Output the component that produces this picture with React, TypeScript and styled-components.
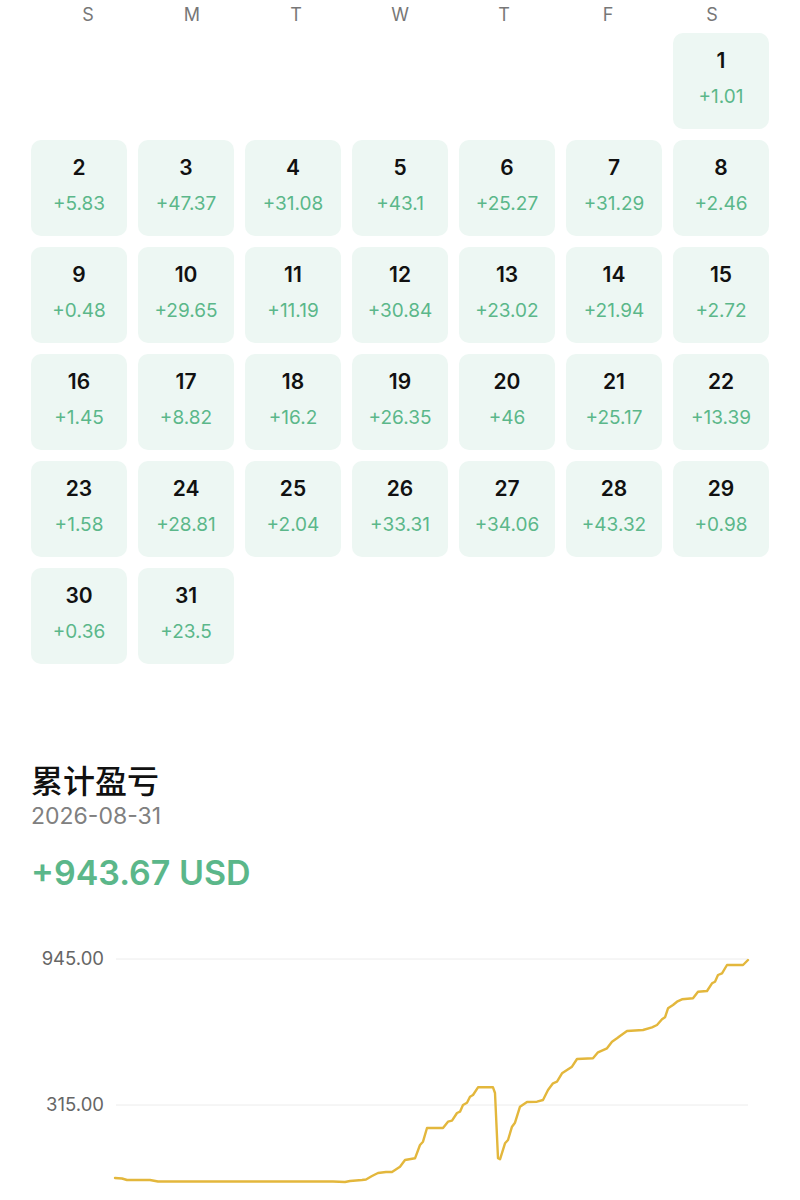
import styled, { createGlobalStyle } from "styled-components";

const WEEKDAYS = ["S", "M", "T", "W", "T", "F", "S"];

// first day of the month falls on Saturday
const LEAD = 6;

const DAILY = [
  1.01, 5.83, 47.37, 31.08, 43.1, 25.27, 31.29, 2.46, 0.48, 29.65, 11.19,
  30.84, 23.02, 21.94, 2.72, 1.45, 8.82, 16.2, 26.35, 46, 25.17, 13.39, 1.58,
  28.81, 2.04, 33.31, 34.06, 43.32, 0.98, 0.36, 23.5,
];

// cumulative curve, in chart pixels (x, y) relative to the svg box
const CURVE: [number, number][] = [
  [115, 248], [122, 248.5], [127, 250], [140, 250], [150, 250], [158, 251.5],
  [200, 251.5], [260, 251.5], [333, 251.5], [345, 252], [350, 251],
  [362, 250], [366, 249.5], [372, 246], [378, 243], [386, 242], [392, 242],
  [400, 236.7], [405, 230], [415, 228.3], [420, 215], [423, 211.7],
  [427, 198], [443, 198], [448, 191.7], [452, 190.7], [457, 183],
  [460, 181.7], [463, 175], [467, 172.7], [470, 166.7], [473, 165],
  [478, 157.3], [493, 157.3], [495, 163], [498, 228.3], [500, 229.3],
  [505, 213.3], [508, 210], [512, 196.7], [515, 192.7], [520, 176.7],
  [527, 172], [537, 171.7], [543, 170], [548, 160], [553, 153.3],
  [557, 151.7], [562, 143.3], [567, 140], [572, 136.7], [577, 129],
  [593, 128.3], [598, 122.3], [607, 118.3], [612, 111.7], [617, 108.3],
  [620, 106], [627, 101], [643, 100], [652, 97.3], [657, 95], [662, 89.3],
  [665, 87.3], [668, 78.3], [673, 75], [677, 71.7], [682, 69.3], [693, 68.3],
  [698, 61.7], [707, 61], [712, 53.3], [715, 51.7], [718, 45], [722, 43.3],
  [727, 35], [743, 35], [748, 30],
];

const GRID = [
  { label: "945.00", y: 29 },
  { label: "315.00", y: 175 },
];

const fmt = (v: number) => (v >= 0 ? "+" : "") + v;

export default function App() {
  const cells: (number | null)[] = [
    ...Array(LEAD).fill(null),
    ...DAILY.map((_, i) => i + 1),
  ];

  return (
    <Page>
      <GlobalStyle />
      <WeekRow>
        {WEEKDAYS.map((d, i) => (
          <WeekDay key={i}>{d}</WeekDay>
        ))}
      </WeekRow>
      <Grid>
        {cells.map((day, i) =>
          day === null ? (
            <Blank key={i} />
          ) : (
            <Cell key={i}>
              <DayNum>{day}</DayNum>
              <DayPnl>{fmt(DAILY[day - 1])}</DayPnl>
            </Cell>
          )
        )}
      </Grid>

      <Summary>
        <Title>累计盈亏</Title>
        <DateText>2026-08-31</DateText>
        <Total>+943.67 USD</Total>
      </Summary>

      <Chart width="800" height="270" viewBox="0 0 800 270">
        {GRID.map((g) => (
          <g key={g.label}>
            <line x1="116" x2="748" y1={g.y} y2={g.y} stroke="#ececec" strokeWidth="1" />
            <AxisLabel x="104" y={g.y + 6} textAnchor="end">
              {g.label}
            </AxisLabel>
          </g>
        ))}
        <polyline
          points={CURVE.map(([x, y]) => `${x},${y}`).join(" ")}
          fill="none"
          stroke="#e3b73c"
          strokeWidth="2.4"
          strokeLinejoin="round"
          strokeLinecap="round"
        />
      </Chart>
    </Page>
  );
}

const GlobalStyle = createGlobalStyle`
  body {
    margin: 0;
    background: #fff;
    font-family: Inter, "Noto Sans", "Noto Sans CJK SC", sans-serif;
  }
`;

const Page = styled.div`
  width: 800px;
  height: 1200px;
  overflow: hidden;
`;

const WeekRow = styled.div`
  display: grid;
  grid-template-columns: repeat(7, 1fr);
  padding: 0 36px;
  height: 30px;
  margin-bottom: 3px;
`;

const WeekDay = styled.div`
  text-align: center;
  line-height: 30px;
  font-size: 18px;
  color: #777;
`;

const Grid = styled.div`
  display: grid;
  grid-template-columns: repeat(7, 96px);
  grid-auto-rows: 96px;
  gap: 11px;
  padding: 0 31px;
`;

const Blank = styled.div``;

const Cell = styled.div`
  display: flex;
  flex-direction: column;
  align-items: center;
  padding-top: 16px;
  gap: 12px;
  background: #edf7f3;
  border-radius: 10px;
`;

const DayNum = styled.div`
  font-size: 21px;
  line-height: 24px;
  font-weight: 600;
  color: #111;
`;

const DayPnl = styled.div`
  font-size: 19px;
  line-height: 24px;
  color: #5bb78a;
`;

const Summary = styled.div`
  display: flex;
  flex-direction: column;
  padding: 0 31px;
  margin-top: 95px;
`;

const Title = styled.h2`
  margin: 0;
  font-family: "Noto Sans CJK SC", sans-serif;
  font-size: 32px;
  line-height: 40px;
  font-weight: 500;
  color: #111;
`;

const DateText = styled.div`
  margin-top: 2px;
  font-size: 23px;
  line-height: 30px;
  color: #808080;
`;

const Total = styled.div`
  margin-top: 22px;
  font-size: 34px;
  line-height: 40px;
  font-weight: 600;
  color: #5bb78a;
`;

const Chart = styled.svg`
  display: block;
  margin-top: 37px;
`;

const AxisLabel = styled.text`
  font-family: Inter, "Noto Sans", sans-serif;
  font-size: 18.5px;
  fill: #666;
`;
